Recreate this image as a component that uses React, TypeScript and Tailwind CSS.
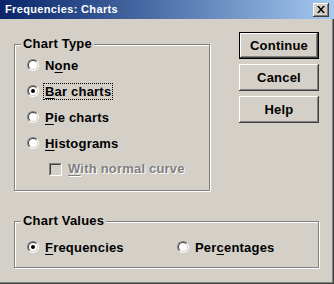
import { ReactNode } from "react";

const font = "font-['Liberation_Sans',Arial,sans-serif]";

const Radio = ({ checked }: { checked?: boolean }) => (
  <span className="w-[12px] h-[12px] rounded-full border border-t-[#808080] border-l-[#808080] border-b-white border-r-white shrink-0">
    <span className="flex items-center justify-center w-full h-full rounded-full border border-t-[#404040] border-l-[#404040] border-b-[#d4d0c8] border-r-[#d4d0c8] bg-white">
      {checked && <span className="w-[4px] h-[4px] rounded-full bg-black" />}
    </span>
  </span>
);

interface RadioRowProps {
  checked?: boolean;
  focused?: boolean;
  children: ReactNode;
}

const RadioRow = ({ checked, focused, children }: RadioRowProps) => (
  <div className="h-[26px] flex items-center">
    <Radio checked={checked} />
    <span
      className={`ml-[4px] px-px leading-[15px] border border-dotted ${
        focused ? "border-black" : "border-transparent"
      }`}
    >
      {children}
    </span>
  </div>
);

const Button = ({ label, isDefault }: { label: string; isDefault?: boolean }) => {
  const inner = (
    <div className="w-full h-full flex items-center justify-center shadow-[inset_-1px_-1px_0_#404040,inset_1px_1px_0_#fff,inset_-2px_-2px_0_#808080,inset_2px_2px_0_#d4d0c8]">
      {label}
    </div>
  );
  return (
    <div className={`w-[80px] h-[27px] ${isDefault ? "border border-black" : ""}`}>{inner}</div>
  );
};

const GroupBox = ({
  title,
  className,
  children,
}: {
  title: string;
  className: string;
  children: ReactNode;
}) => (
  <div
    className={`relative border border-[#808080] shadow-[inset_1px_1px_0_#fff,1px_1px_0_#fff] ${className}`}
  >
    <span className="absolute left-[6px] top-[-9px] px-[2px] leading-[16px] bg-[#d4d0c8]">{title}</span>
    {children}
  </div>
);

export default function App() {
  return (
    <div
      className={`${font} w-[334px] h-[284px] bg-[#d4d0c8] text-black text-[13px] font-bold tracking-[0.2px] shadow-[inset_-1px_-1px_0_#404040,inset_-2px_-2px_0_#808080] flex flex-col`}
    >
      <div className="h-[19px] flex items-center justify-between bg-gradient-to-r from-[#0a246a] to-[#a6caf0] pl-[5px] pr-[5px]">
        <span className="text-white text-[11px] tracking-[0.35px]">Frequencies: Charts</span>
        <div className="w-[16px] h-[14px] flex items-center justify-center bg-[#d4d0c8] shadow-[inset_-1px_-1px_0_#404040,inset_1px_1px_0_#fff,inset_-2px_-2px_0_#808080]">
          <svg width="8" height="7" viewBox="0 0 8 7">
            <path d="M0 0h2l2 2.5L6 0h2L5 3.5 8 7H6L4 4.5 2 7H0l3-3.5z" fill="#000" />
          </svg>
        </div>
      </div>

      <div className="flex">
        <GroupBox title="Chart Type" className="ml-[14px] mt-[25px] w-[196px] h-[147px]">
          <div className="pt-[7px] pl-[12px]">
            <RadioRow>
              N<u className="underline-offset-2">o</u>ne
            </RadioRow>
            <RadioRow checked focused>
              <u className="underline-offset-2">B</u>ar charts
            </RadioRow>
            <RadioRow>
              <u className="underline-offset-2">P</u>ie charts
            </RadioRow>
            <RadioRow>
              <u className="underline-offset-2">H</u>istograms
            </RadioRow>
            <div className="h-[26px] flex items-center pl-[22px]">
              <span className="w-[13px] h-[13px] border border-t-[#808080] border-l-[#808080] border-b-white border-r-white">
                <span className="block w-full h-full border border-t-[#404040] border-l-[#404040] border-b-[#d4d0c8] border-r-[#d4d0c8] bg-[#d4d0c8]" />
              </span>
              <span className="ml-[6px] text-[#808080] [text-shadow:1px_1px_0_#fff]">
                <u className="underline-offset-2">W</u>ith normal curve
              </span>
            </div>
          </div>
        </GroupBox>

        <div className="ml-[29px] mt-[13px] flex flex-col gap-[5px]">
          <Button label="Continue" isDefault />
          <Button label="Cancel" />
          <Button label="Help" />
        </div>
      </div>

      <GroupBox title="Chart Values" className="ml-[14px] mt-[30px] w-[305px] h-[47px]">
        <div className="flex pt-[12px] pl-[12px]">
          <div className="w-[150px]">
            <RadioRow checked>
              <u className="underline-offset-2">F</u>requencies
            </RadioRow>
          </div>
          <RadioRow>
            Per<u className="underline-offset-2">c</u>entages
          </RadioRow>
        </div>
      </GroupBox>
    </div>
  );
}
